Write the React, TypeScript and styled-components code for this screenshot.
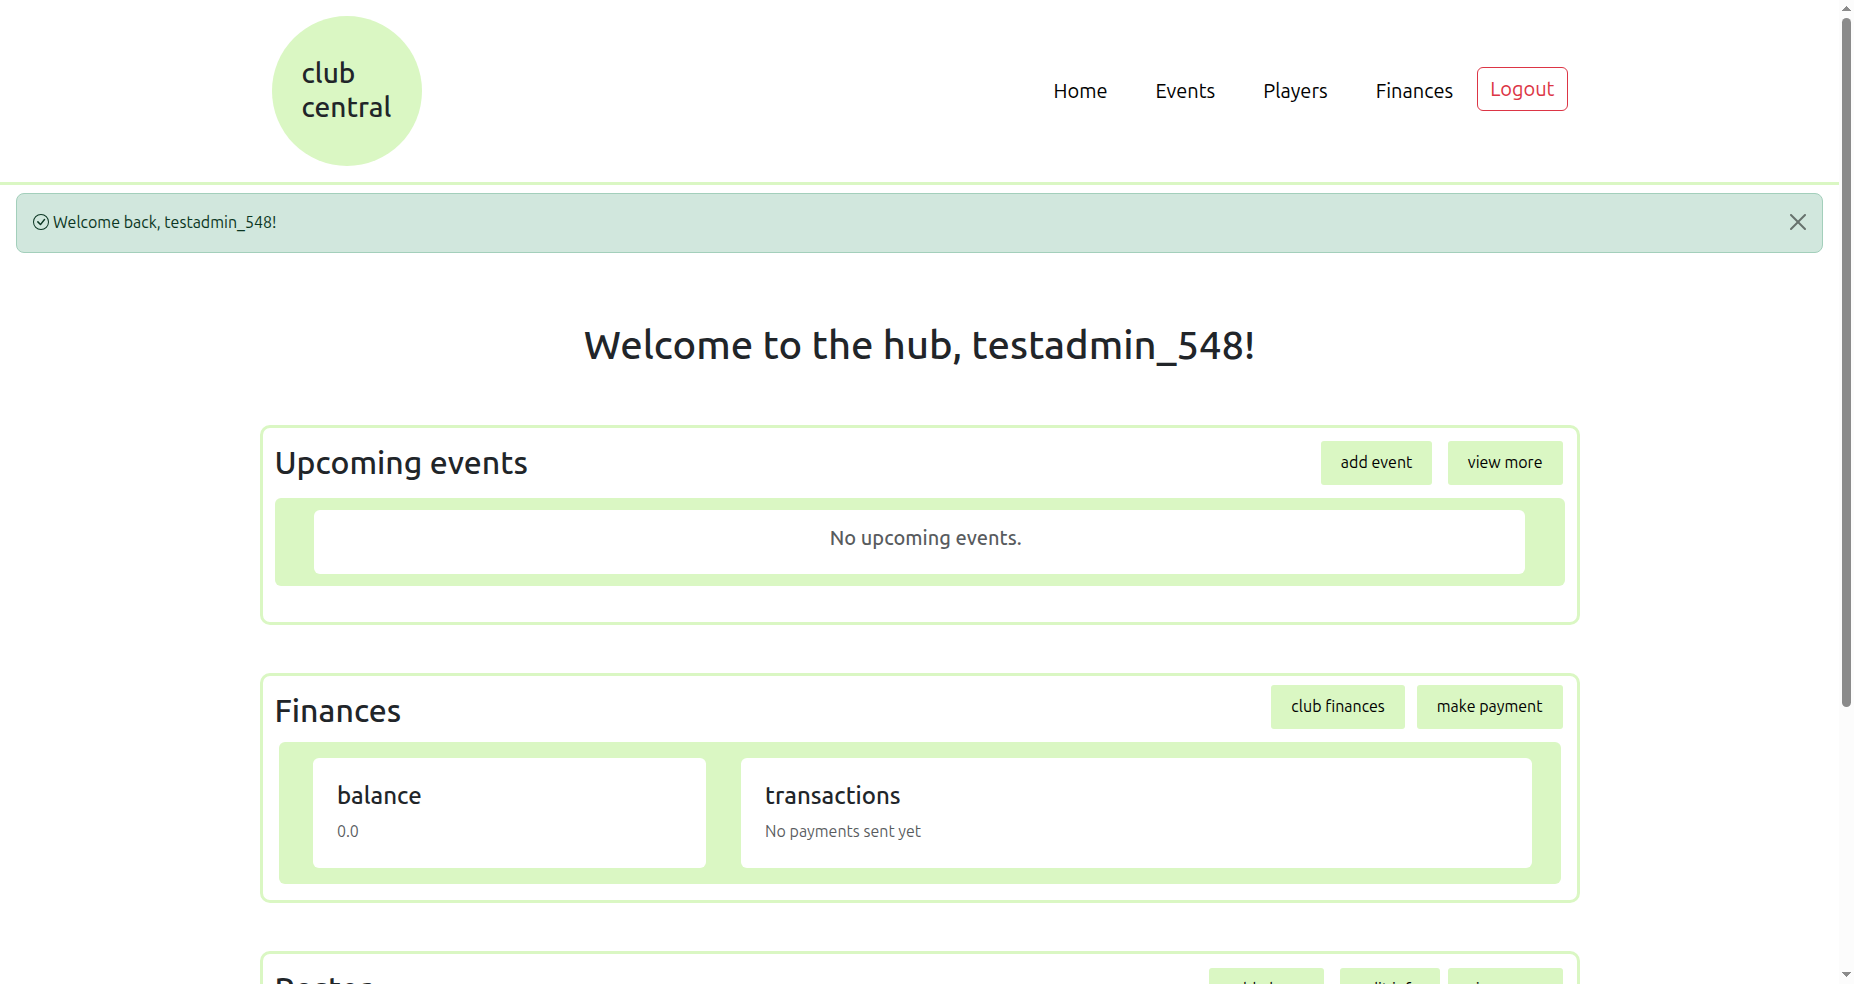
import React from "react";
import styled, { createGlobalStyle } from "styled-components";

const GREEN = "#daf7c3";
const INK = "#212529";

const GlobalStyle = createGlobalStyle`
  *, *::before, *::after { box-sizing: border-box; }
  body {
    margin: 0;
    background: #fff;
    color: ${INK};
    font-family: Ubuntu, "Noto Sans", sans-serif;
    font-size: 16px;
    line-height: 1.5;
    overflow: hidden;
  }
  h1, h2, h3, h4, h5, p { margin: 0; font-weight: 500; line-height: 1.2; }
`;

const Viewport = styled.div`
  display: flex;
  height: 100vh;
  overflow: hidden;
`;

const Page = styled.div`
  flex: 1;
  min-width: 0;
  overflow: hidden;
`;

const Header = styled.header`
  border-bottom: 3px solid ${GREEN};
`;

const Container = styled.div`
  width: 1320px;
  margin: 0 auto;
`;

const HeaderRow = styled(Container)`
  display: flex;
  align-items: center;
  justify-content: space-between;
  padding: 16px 12px;
`;

const Brand = styled.a`
  width: 150px;
  height: 150px;
  padding: 40px 30px 0;
  border-radius: 50%;
  background: ${GREEN};
  color: ${INK};
  font-size: 28px;
  font-weight: 500;
  line-height: 1.2;
`;

const Nav = styled.nav`
  display: flex;
  align-items: center;
  font-size: 20px;
`;

const NavLink = styled.a`
  padding: 0 24px;
  color: #000;
`;

const LogoutButton = styled.button`
  margin: 0 0 4px;
  padding: 6px 12px;
  border: 1px solid #dc3545;
  border-radius: 6px;
  background: transparent;
  color: #dc3545;
  font: inherit;
`;

const Alert = styled.div`
  display: flex;
  align-items: flex-start;
  justify-content: space-between;
  height: 60px;
  margin: 8px 16px 0;
  padding: 16px;
  border: 1px solid #a3cfbb;
  border-radius: 8px;
  background: #d1e7dd;
  color: #0a3622;
`;

const AlertMessage = styled.span`
  display: flex;
  align-items: flex-start;
  gap: 4px;

  svg { margin-top: 4px; }
`;

const CloseButton = styled.button`
  display: flex;
  margin: 4px 0 0;
  padding: 0;
  border: 0;
  background: none;
  color: #000;
  opacity: 0.5;
`;

const Title = styled.h1`
  margin: 68px 0 56px;
  font-size: 40px;
  text-align: center;
`;

const Section = styled.section<{ $height: number }>`
  height: ${(p) => p.$height}px;
  margin-bottom: 48px;
  padding: 0 12px;
  border: 3px solid ${GREEN};
  border-radius: 10px;
`;

const SectionHead = styled.div<{ $height: number }>`
  display: flex;
  align-items: flex-start;
  justify-content: space-between;
  height: ${(p) => p.$height}px;
`;

const SectionTitle = styled.h2`
  margin-top: 15px;
  font-size: 32px;
`;

const Actions = styled.div<{ $top: number; $gap: number }>`
  display: flex;
  gap: ${(p) => p.$gap}px;
  padding: ${(p) => p.$top}px 2px 0 0;
`;

const ActionGroup = styled.div`
  display: flex;
  gap: 7.5px;
`;

const ActionButton = styled.a`
  padding: 9px 20px 11px;
  border-radius: 3px;
  background: ${GREEN};
  color: #000;
  white-space: nowrap;
`;

const EventsPanel = styled.div`
  padding: 12px 39.5px 12px 39px;
  border-radius: 6px;
  background: ${GREEN};
`;

const EmptyEvents = styled.div`
  height: 64px;
  padding: 16px 0 0 13px;
  border-radius: 6px;
  background: #fff;
  color: rgba(33, 37, 41, 0.75);
  text-align: center;

  h5 { font-size: 20px; }
`;

const FinancesPanel = styled.div`
  display: grid;
  grid-template-columns: 393px 1fr;
  gap: 35.2px;
  margin: 0 4px;
  padding: 16px 29px 16px 34.4px;
  border-radius: 6px;
  background: ${GREEN};
`;

const InfoCard = styled.div`
  height: 110px;
  padding: 24px;
  border-radius: 6px;
  background: #fff;
`;

const InfoTitle = styled.h4`
  margin-bottom: 8px;
  font-size: 24px;
`;

const InfoText = styled.p`
  color: rgba(33, 37, 41, 0.75);
  font-weight: 400;
  line-height: 1.5;
`;

const ScrollTrack = styled.div`
  display: flex;
  flex-direction: column;
  align-items: center;
  width: 15px;
  padding: 6px 0 7px;
  background: #fcfcfc;
`;

const ScrollThumb = styled.div`
  width: 9px;
  height: 689px;
  margin: 7px 0 auto;
  border-radius: 4.5px;
  background: #8b8b8b;
`;

const Arrow = ({ down = false }: { down?: boolean }) => (
  <svg width="9" height="5" viewBox="0 0 9 5" fill="#8b8b8b" shapeRendering="crispEdges">
    <path d={down ? "M0 0h9L4.5 5z" : "M0 5h9L4.5 0z"} />
  </svg>
);

const CheckCircle = () => (
  <svg width="16" height="16" viewBox="0 0 16 16" fill="currentColor">
    <path d="M8 15A7 7 0 1 1 8 1a7 7 0 0 1 0 14m0 1A8 8 0 1 0 8 0a8 8 0 0 0 0 16" />
    <path d="m10.97 4.97-.02.022-3.473 4.425-2.093-2.094a.75.75 0 0 0-1.06 1.06L6.97 11.03a.75.75 0 0 0 1.079-.02l3.992-4.99a.75.75 0 0 0-1.071-1.05" />
  </svg>
);

const CloseIcon = () => (
  <svg width="16" height="16" viewBox="0 0 16 16" fill="currentColor">
    <path d="M.293.293a1 1 0 0 1 1.414 0L8 6.586 14.293.293a1 1 0 1 1 1.414 1.414L9.414 8l6.293 6.293a1 1 0 0 1-1.414 1.414L8 9.414l-6.293 6.293a1 1 0 0 1-1.414-1.414L6.586 8 .293 1.707a1 1 0 0 1 0-1.414" />
  </svg>
);

export default function App() {
  return (
    <>
      <GlobalStyle />
      <Viewport>
        <Page>
          <Header>
            <HeaderRow>
              <Brand>
                club
                <br />
                central
              </Brand>
              <Nav>
                {["Home", "Events", "Players", "Finances"].map((label) => (
                  <NavLink key={label}>{label}</NavLink>
                ))}
                <LogoutButton>Logout</LogoutButton>
              </Nav>
            </HeaderRow>
          </Header>

          <Alert role="alert">
            <AlertMessage>
              <CheckCircle />
              Welcome back, testadmin_548!
            </AlertMessage>
            <CloseButton aria-label="Close">
              <CloseIcon />
            </CloseButton>
          </Alert>

          <Title>Welcome to the hub, testadmin_548!</Title>

          <Container>
            <Section $height={200}>
              <SectionHead $height={70}>
                <SectionTitle>Upcoming events</SectionTitle>
                <Actions $top={13} $gap={15.5}>
                  <ActionButton>add event</ActionButton>
                  <ActionButton>view more</ActionButton>
                </Actions>
              </SectionHead>
              <EventsPanel>
                <EmptyEvents>
                  <h5>No upcoming events.</h5>
                </EmptyEvents>
              </EventsPanel>
            </Section>

            <Section $height={230}>
              <SectionHead $height={66}>
                <SectionTitle>Finances</SectionTitle>
                <Actions $top={9} $gap={12}>
                  <ActionButton>club finances</ActionButton>
                  <ActionButton>make payment</ActionButton>
                </Actions>
              </SectionHead>
              <FinancesPanel>
                <InfoCard>
                  <InfoTitle>balance</InfoTitle>
                  <InfoText>0.0</InfoText>
                </InfoCard>
                <InfoCard>
                  <InfoTitle>transactions</InfoTitle>
                  <InfoText>No payments sent yet</InfoText>
                </InfoCard>
              </FinancesPanel>
            </Section>

            <Section $height={200}>
              <SectionHead $height={70}>
                <SectionTitle>Roster</SectionTitle>
                <Actions $top={14} $gap={15.5}>
                  <ActionButton>add player</ActionButton>
                  <ActionGroup>
                    <ActionButton>edit info</ActionButton>
                    <ActionButton>view more</ActionButton>
                  </ActionGroup>
                </Actions>
              </SectionHead>
            </Section>
          </Container>
        </Page>
        <ScrollTrack>
          <Arrow />
          <ScrollThumb />
          <Arrow down />
        </ScrollTrack>
      </Viewport>
    </>
  );
}
